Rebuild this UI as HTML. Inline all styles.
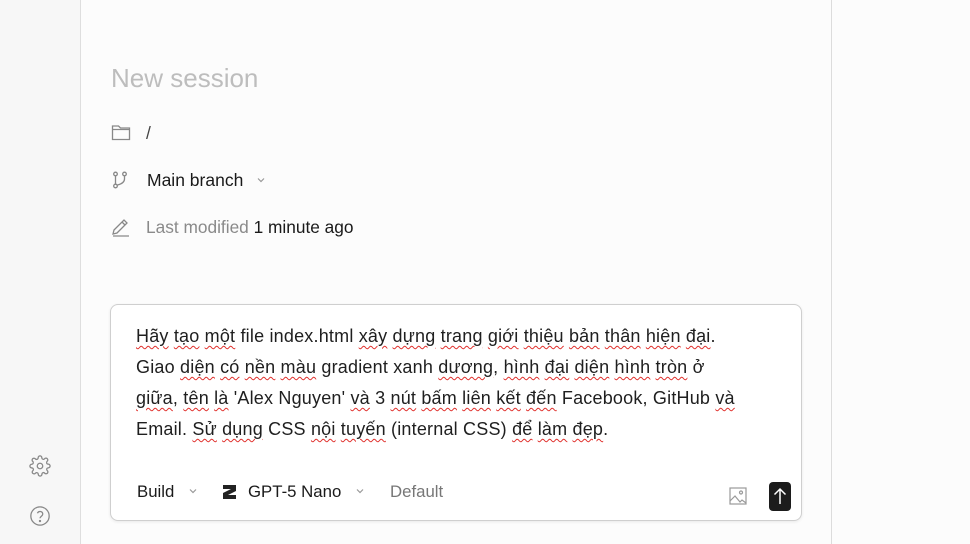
<!DOCTYPE html>
<html><head><meta charset="utf-8"><style>
*{margin:0;padding:0;box-sizing:border-box}
body{width:970px;height:544px;overflow:hidden;background:#fcfcfc;font-family:"Liberation Sans",sans-serif;position:relative}
.side{position:absolute;left:0;top:0;width:81px;height:544px;background:#f7f7f7;border-right:1px solid #dedede}
.rb{position:absolute;left:831px;top:0;width:1px;height:544px;background:#dcdcdc}
.t{position:absolute;white-space:nowrap}
.w{text-decoration:underline wavy #e0302c;text-decoration-thickness:1px;text-underline-offset:3px}
.box{position:absolute;left:110px;top:304px;width:692px;height:217px;background:#fff;border:1px solid #cfcfcf;border-radius:8px;box-shadow:0 1px 3px rgba(0,0,0,.08)}
.p{position:absolute;left:25px;top:16px;font-size:18px;line-height:31px;color:#1f1f1f;letter-spacing:0.2px;white-space:nowrap}
</style></head><body>
<div class="side"></div><div class="rb"></div>
<svg style="position:absolute;left:29px;top:455px" width="22" height="22" viewBox="0 0 24 24" fill="none" stroke="#888" stroke-width="1.4"><circle cx="12" cy="12" r="3"/><path d="M19.4 15a1.7 1.7 0 0 0 .3 1.8l.1.1a2 2 0 1 1-2.8 2.8l-.1-.1a1.7 1.7 0 0 0-1.8-.3 1.7 1.7 0 0 0-1 1.5V21a2 2 0 1 1-4 0v-.1a1.7 1.7 0 0 0-1.1-1.5 1.7 1.7 0 0 0-1.8.3l-.1.1a2 2 0 1 1-2.8-2.8l.1-.1a1.7 1.7 0 0 0 .3-1.8 1.7 1.7 0 0 0-1.5-1H3a2 2 0 1 1 0-4h.1a1.7 1.7 0 0 0 1.5-1.1 1.7 1.7 0 0 0-.3-1.8l-.1-.1a2 2 0 1 1 2.8-2.8l.1.1a1.7 1.7 0 0 0 1.8.3H9a1.7 1.7 0 0 0 1-1.5V3a2 2 0 1 1 4 0v.1a1.7 1.7 0 0 0 1 1.5 1.7 1.7 0 0 0 1.8-.3l.1-.1a2 2 0 1 1 2.8 2.8l-.1.1a1.7 1.7 0 0 0-.3 1.8V9a1.7 1.7 0 0 0 1.5 1H21a2 2 0 1 1 0 4h-.1a1.7 1.7 0 0 0-1.5 1z"/></svg>
<svg style="position:absolute;left:29px;top:505px" width="22" height="22" viewBox="0 0 24 24" fill="none" stroke="#888" stroke-width="1.4"><circle cx="12" cy="12" r="10"/><path d="M9.2 9a3 3 0 0 1 5.8 1c0 2-3 2.5-3 4.5"/><circle cx="12" cy="17.5" r=".6" fill="#888"/></svg>

<div class="t" style="left:111px;top:63px;font-size:26px;color:#bdbdbd">New session</div>
<svg style="position:absolute;left:111px;top:124px" width="20" height="17" viewBox="0 0 20 17" fill="none" stroke="#888" stroke-width="1.3"><path d="M1.5 2h6l2 2h9v11.5h-17z"/><path d="M1.5 5.5h17"/></svg>
<div class="t" style="left:146px;top:123px;font-size:17.5px;color:#444">/</div>
<svg style="position:absolute;left:112px;top:171px" width="16" height="18" viewBox="0 0 16 18" fill="none" stroke="#888" stroke-width="1.3"><circle cx="3.5" cy="3" r="1.8"/><circle cx="3.5" cy="15" r="1.8"/><circle cx="12.5" cy="3" r="1.8"/><path d="M3.5 5v8M12.5 5v3c0 3-3 5-7 6"/></svg>
<div class="t" style="left:147px;top:170px;font-size:17.5px;color:#1a1a1a">Main branch</div>
<svg style="position:absolute;left:256px;top:176px" width="10" height="8" viewBox="0 0 10 8" fill="none" stroke="#999" stroke-width="1.2"><path d="M2 2.5l3 3 3-3"/></svg>
<svg style="position:absolute;left:111px;top:217px" width="20" height="20" viewBox="0 0 20 20" fill="none" stroke="#888" stroke-width="1.3"><path d="M2 17l1-4L13 3l3 3L6 16l-4 1zM11 5l3 3M2 19h16"/></svg>
<div class="t" style="left:146px;top:217px;font-size:17.3px;color:#8a8a8a">Last modified <span style="color:#1a1a1a">1 minute ago</span></div>

<div class="box">
<div class="p"><span class="w">Hãy</span> <span class="w">tạo</span> <span class="w">một</span> file index.html <span class="w">xây</span> <span class="w">dựng</span> <span class="w">trang</span> <span class="w">giới</span> <span class="w">thiệu</span> <span class="w">bản</span> <span class="w">thân</span> <span class="w">hiện</span> <span class="w">đại</span>.<br><span>Giao</span> <span class="w">diện</span> <span class="w">có</span> <span class="w">nền</span> <span class="w">màu</span> gradient <span>xanh</span> <span class="w">dương</span>, <span class="w">hình</span> <span class="w">đại</span> <span class="w">diện</span> <span class="w">hình</span> <span class="w">tròn</span> ở<br><span class="w">giữa</span>, <span class="w">tên</span> <span class="w">là</span> 'Alex Nguyen' <span class="w">và</span> 3 <span class="w">nút</span> <span class="w">bấm</span> <span class="w">liên</span> <span class="w">kết</span> <span class="w">đến</span> Facebook, GitHub <span class="w">và</span><br>Email. <span class="w">Sử</span> <span class="w">dụng</span> CSS <span class="w">nội</span> <span class="w">tuyến</span> (internal CSS) <span class="w">để</span> <span class="w">làm</span> <span class="w">đẹp</span>.</div>
<div class="t" style="left:26px;top:177px;font-size:16.8px;color:#1a1a1a">Build</div>
<svg style="position:absolute;left:77px;top:182px" width="10" height="8" viewBox="0 0 10 8" fill="none" stroke="#999" stroke-width="1.2"><path d="M2 2.5l3 3 3-3"/></svg>
<svg style="position:absolute;left:112px;top:180px" width="13" height="14" viewBox="0 0 13 14"><path d="M0 0h13v6L5 10h8v4H0V8l8-4H0z" fill="#222"/></svg>
<div class="t" style="left:137px;top:177px;font-size:16.8px;color:#1a1a1a">GPT-5 Nano</div>
<svg style="position:absolute;left:244px;top:182px" width="10" height="8" viewBox="0 0 10 8" fill="none" stroke="#999" stroke-width="1.2"><path d="M2 2.5l3 3 3-3"/></svg>
<div class="t" style="left:279px;top:177px;font-size:16.8px;color:#777">Default</div>
<svg style="position:absolute;left:618px;top:182px" width="18" height="18" viewBox="0 0 18 18" fill="none" stroke="#999" stroke-width="1.2"><rect x="1" y="1" width="16" height="16"/><circle cx="12" cy="5.5" r="1.5"/><path d="M1 14l5-5 5 6 2-2 4 3"/></svg>
<div style="position:absolute;left:658px;top:177px;width:22px;height:29px;background:#1c1c1c;border-radius:4px"><svg width="22" height="29" viewBox="0 0 22 29" fill="none" stroke="#fff" stroke-width="1.5"><path d="M11 22V7M5.5 12.5L11 7l5.5 5.5"/></svg></div>
</div>
</body></html>
